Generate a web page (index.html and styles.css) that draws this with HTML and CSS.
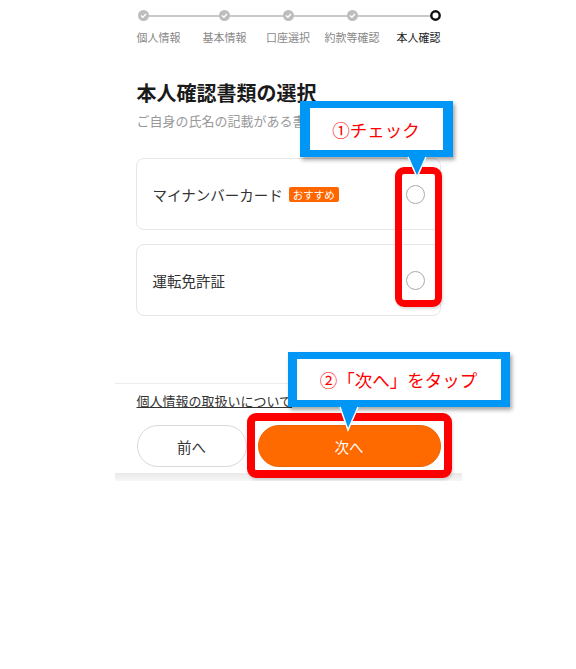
FILE: index.html
```html
<!DOCTYPE html>
<html lang="ja">
<head>
  <meta charset="UTF-8">
  <meta name="viewport" content="width=device-width, initial-scale=1.0">
  <title>本人確認書類の選択</title>
  <link rel="stylesheet" href="styles.css">
</head>
<body>
  <div class="screen">
    <!-- ステップ表示 -->
    <div class="stepper">
      <div class="stepper-line"></div>
      <div class="step first">
        <svg class="step-dot" width="11" height="11" viewBox="0 0 11 11">
          <circle cx="5.5" cy="5.5" r="5.5" fill="#bdbdbd" />
          <path d="M3 5.6 L4.8 7.3 L8 3.9" fill="none" stroke="#fff" stroke-width="1.4" />
        </svg>
        <span class="step-label">個人情報</span>
      </div>
      <div class="step">
        <svg class="step-dot" width="11" height="11" viewBox="0 0 11 11">
          <circle cx="5.5" cy="5.5" r="5.5" fill="#bdbdbd" />
          <path d="M3 5.6 L4.8 7.3 L8 3.9" fill="none" stroke="#fff" stroke-width="1.4" />
        </svg>
        <span class="step-label">基本情報</span>
      </div>
      <div class="step">
        <svg class="step-dot" width="11" height="11" viewBox="0 0 11 11">
          <circle cx="5.5" cy="5.5" r="5.5" fill="#bdbdbd" />
          <path d="M3 5.6 L4.8 7.3 L8 3.9" fill="none" stroke="#fff" stroke-width="1.4" />
        </svg>
        <span class="step-label">口座選択</span>
      </div>
      <div class="step">
        <svg class="step-dot" width="11" height="11" viewBox="0 0 11 11">
          <circle cx="5.5" cy="5.5" r="5.5" fill="#bdbdbd" />
          <path d="M3 5.6 L4.8 7.3 L8 3.9" fill="none" stroke="#fff" stroke-width="1.4" />
        </svg>
        <span class="step-label">約款等確認</span>
      </div>
      <div class="step last current">
        <svg class="step-dot" width="11" height="11" viewBox="0 0 11 11">
          <circle cx="5.5" cy="5.5" r="4.2" fill="#fff" stroke="#111" stroke-width="2.4" />
        </svg>
        <span class="step-label">本人確認</span>
      </div>
    </div>

    <div class="main">
      <h1 class="title">本人確認書類の選択</h1>
      <p class="subtitle">ご自身の氏名の記載がある書類を選択してください</p>

      <div class="doc-list">
        <label class="doc-card">
          <span class="doc-name">マイナンバーカード<span class="badge">おすすめ</span></span>
          <span class="radio"></span>
        </label>
        <label class="doc-card">
          <span class="doc-name">運転免許証</span>
          <span class="radio"></span>
        </label>
      </div>
    </div>

    <!-- フッター -->
    <div class="footer">
      <a class="privacy-link" href="#">個人情報の取扱いについて</a>
      <div class="footer-buttons">
        <button class="btn btn-back">前へ</button>
        <button class="btn btn-next">次へ</button>
      </div>
    </div>
    <div class="bottom-strip"></div>

    <!-- 説明用の注釈 -->
    <div class="mark mark-radio"></div>
    <div class="mark mark-next"></div>

    <div class="callout callout-check">
      <span>①チェック</span>
    </div>
    <svg class="pointer pointer-check" width="24" height="24" viewBox="0 0 24 24">
      <polygon points="2,0 22,0 12,22" fill="#0096f5" />
      <polyline points="3,1 12,21 21,1" fill="none" stroke="#fff" stroke-width="1.5" />
    </svg>

    <div class="callout callout-next">
      <span>②「次へ」をタップ</span>
    </div>
    <svg class="pointer pointer-next" width="24" height="26" viewBox="0 0 24 26">
      <polygon points="2,0 22,0 11,25" fill="#0096f5" />
      <polyline points="3,1 11,24 21,1" fill="none" stroke="#fff" stroke-width="1.5" />
    </svg>
  </div>
</body>
</html>
```

FILE: styles.css
```css
* {
  margin: 0;
  padding: 0;
  box-sizing: border-box;
}

body {
  font-family: "Noto Sans CJK JP", "Noto Sans", sans-serif;
  background-color: #fff;
  color: #333;
}

.screen {
  position: relative;
  width: 347px;
  margin: 0 auto;
  background-color: #fff;
}

/* ステップ表示 */
.stepper {
  position: relative;
  display: grid;
  grid-template-columns: 53px 70px 57px 71px 53px;
  padding: 10px 21px 0 22px;
}

.stepper-line {
  position: absolute;
  top: 15px;
  left: 28px;
  right: 26px;
  height: 1.5px;
  background-color: #c9c9c9;
}

.step {
  position: relative;
  display: flex;
  flex-direction: column;
  align-items: center;
  gap: 8px;
}

.step.first {
  align-items: flex-start;
}

.step.first .step-dot {
  margin-left: 1px;
}

.step.last {
  align-items: flex-end;
}

.step-dot {
  display: block;
}

.step-label {
  font-size: 11px;
  line-height: 16px;
  color: #888;
  white-space: nowrap;
}

.step.current .step-label {
  color: #222;
}

/* メイン */
.main {
  padding: 0 21px;
}

.title {
  margin-top: 34px;
  padding-left: 1px;
  font-size: 20px;
  line-height: 28px;
  font-weight: 700;
  color: #1a1a1a;
}

.subtitle {
  margin-top: 4px;
  padding-left: 1px;
  font-size: 13px;
  line-height: 20px;
  color: #999;
  white-space: nowrap;
}

.doc-list {
  display: flex;
  flex-direction: column;
  gap: 14px;
  margin-top: 27px;
}

.doc-card {
  display: flex;
  align-items: center;
  justify-content: space-between;
  height: 72px;
  padding: 0 15px 0 16px;
  border: 1px solid #e6e6e6;
  border-radius: 8px;
  cursor: pointer;
}

.doc-name {
  display: flex;
  align-items: center;
  font-size: 14.5px;
  color: #333;
}

.badge {
  margin-left: 6px;
  padding: 0 4px;
  height: 15px;
  line-height: 15px;
  font-size: 10.5px;
  color: #fff;
  background-color: #ff6600;
  border-radius: 2px;
}

.radio {
  width: 19px;
  height: 19px;
  border: 1px solid #aaa;
  border-radius: 50%;
}

/* フッター */
.footer {
  margin-top: 67px;
  padding: 8px 21px 6px 22px;
  border-top: 1px solid #ececec;
}

.privacy-link {
  display: block;
  font-size: 13px;
  line-height: 18px;
  color: #333;
  text-decoration: underline;
}

.footer-buttons {
  display: flex;
  gap: 11px;
  margin-top: 15px;
}

.btn {
  height: 42px;
  border-radius: 21px;
  font-family: inherit;
  font-size: 14.5px;
  cursor: pointer;
}

.btn-back {
  width: 110px;
  background-color: #fff;
  color: #333;
  border: 1px solid #d9d9d9;
}

.btn-next {
  flex: 1;
  background-color: #ff6a00;
  color: #fff;
  border: 1px solid #f06400;
}

.bottom-strip {
  height: 8px;
  background: linear-gradient(#e9e9e9, #f6f6f6);
}

/* 注釈 */
.mark {
  position: absolute;
  border: 7px solid #ff0000;
  border-radius: 9px;
  box-shadow: 1px 2px 3px rgba(0, 0, 0, 0.15);
}

.mark-radio {
  left: 280px;
  top: 167px;
  width: 47px;
  height: 140px;
}

.mark-next {
  left: 132px;
  top: 413px;
  width: 205px;
  height: 65px;
  border-width: 8px;
}

.callout {
  position: absolute;
  display: flex;
  align-items: center;
  justify-content: center;
  background-color: #fff;
  border: 7px solid #0096f5;
  box-shadow: 2px 3px 4px rgba(0, 0, 0, 0.35);
  font-size: 17.5px;
  color: #ff0000;
  white-space: nowrap;
}

.callout-check {
  left: 185px;
  top: 101px;
  width: 153px;
  height: 56px;
  border-width: 7px 10px;
}

.callout-next {
  left: 173px;
  top: 352px;
  width: 222px;
  height: 55px;
  border-width: 7px 9px;
}

.pointer {
  position: absolute;
}

.pointer-check {
  left: 290px;
  top: 156px;
}

.pointer-next {
  left: 222px;
  top: 406px;
}
```
